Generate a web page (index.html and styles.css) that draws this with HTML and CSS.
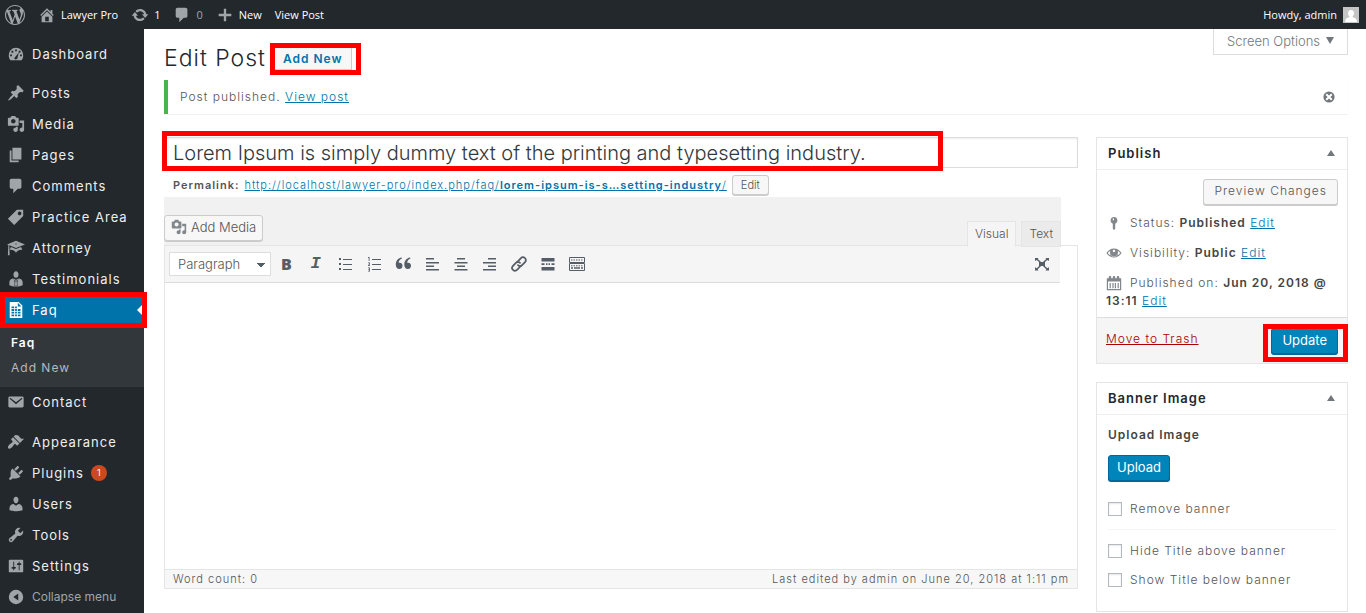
FILE: index.html
```html
<!DOCTYPE html>
<html lang="en">
<head>
<meta charset="utf-8">
<title>Edit Post - Lawyer Pro</title>
<link rel="stylesheet" href="styles.css">
</head>
<body>
<svg class="sprite" aria-hidden="true">
  <symbol id="i-wp" viewBox="0 0 20 20"><path d="M20 10c0-5.51-4.49-10-10-10C4.48 0 0 4.49 0 10c0 5.52 4.48 10 10 10 5.51 0 10-4.48 10-10zM7.78 15.37L4.37 6.22c.55-.02 1.17-.08 1.17-.08.5-.06.44-1.13-.06-1.11 0 0-1.45.11-2.37.11-.18 0-.37 0-.58-.01C4.12 2.69 6.87 1.11 10 1.11c2.33 0 4.45.87 6.05 2.34-.68-.11-1.65.39-1.65 1.58 0 .74.45 1.36.9 2.1.35.61.55 1.36.55 2.46 0 1.49-1.4 5-1.4 5l-3.03-8.37c.54-.02.82-.17.82-.17.5-.05.44-1.25-.06-1.22 0 0-1.44.12-2.38.12-.87 0-2.33-.12-2.33-.12-.5-.03-.56 1.2-.06 1.22l.92.08 1.26 3.41zM17.41 10c.24-.64.74-1.87.43-4.25.7 1.29 1.05 2.71 1.05 4.25 0 3.29-1.73 6.24-4.4 7.78.97-2.59 1.94-5.2 2.92-7.78zM6.1 18.09C3.12 16.65 1.11 13.53 1.11 10c0-1.3.23-2.48.72-3.59C3.25 10.3 4.67 14.2 6.1 18.09zm4.03-6.63l2.58 6.98c-.86.29-1.76.45-2.71.45-.79 0-1.57-.11-2.29-.33.81-2.38 1.62-4.74 2.42-7.1z"/></symbol>
  <symbol id="i-home" viewBox="0 0 20 20"><path d="M16 8.5l1.53 1.53-1.06 1.06L10 4.6l-6.47 6.49-1.06-1.06L10 2.5l4 4v-2h2v4zm-6-2.46l6 5.99V18H4v-5.97zM12 17v-5H8v5h4z"/></symbol>
  <symbol id="i-update" viewBox="0 0 20 20"><path d="M10.2 3.28c3.53 0 6.43 2.61 6.92 6h2.08l-3.5 4-3.5-4h2.32c-.45-1.97-2.21-3.45-4.32-3.45-1.45 0-2.73.71-3.54 1.78L4.95 5.66C6.23 4.2 8.11 3.28 10.2 3.28zm-.4 13.44c-3.52 0-6.43-2.61-6.92-6H.8l3.5-4c1.17 1.33 2.33 2.67 3.5 4H5.48c.45 1.97 2.21 3.45 4.32 3.45 1.45 0 2.73-.71 3.54-1.78l1.71 1.95c-1.28 1.46-3.15 2.38-5.25 2.38z"/></symbol>
  <symbol id="i-comment" viewBox="0 0 20 20"><path d="M5 2h9c1.1 0 2 .9 2 2v7c0 1.1-.9 2-2 2h-2l-5 5v-5H5c-1.1 0-2-.9-2-2V4c0-1.1.9-2 2-2z"/></symbol>
  <symbol id="i-plus" viewBox="0 0 20 20"><path d="M17 8.700v2.600h-5.700V17H8.700v-5.700H3V8.700h5.700V3h2.600v5.700z"/></symbol>
  <symbol id="i-dashboard" viewBox="0 0 20 20"><path fill-rule="evenodd" d="M3.760 17h12.480C17.580 15.370 18 13.500 18 12c0-5.500-3.580-9-8-9s-8 3.500-8 9c0 1.500.42 3.370 1.760 5zM9 5h2v2H9zM5 6.500h2v2H5zM13 6.500h2v2h-2zM3.500 10.500h2v2h-2zM14.500 10.500h2v2h-2zM8.200 14.500L13.200 8.300l-1.700 6.700c-.4 1.600-3.800 1.200-3.300-.5z"/></symbol>
  <symbol id="i-pin" viewBox="0 0 20 20"><path d="M10.440 3.020l1.820-1.820 6.360 6.350-1.830 1.820c-1.050-.68-2.480-.57-3.410.36l-.75.75c-.92.93-1.040 2.350-.35 3.410l-1.830 1.820-2.410-2.410-2.800 2.790c-.42.42-3.380 2.710-3.800 2.290s1.860-3.390 2.280-3.810l2.790-2.790L4.100 9.360l1.830-1.820c1.050.69 2.480.57 3.400-.36l.75-.75c.93-.92 1.050-2.350.36-3.410z"/></symbol>
  <symbol id="i-media" viewBox="0 0 20 20"><path d="M13 11V4c0-.55-.45-1-1-1h-1.670L9 1H5L3.670 3H2c-.55 0-1 .45-1 1v7c0 .55.45 1 1 1h10c.55 0 1-.45 1-1zM7 4.500c1.380 0 2.500 1.120 2.500 2.500S8.380 9.500 7 9.500 4.500 8.380 4.500 7 5.620 4.500 7 4.500zM14 6h5v10.500c0 1.380-1.120 2.500-2.500 2.500S14 17.880 14 16.500s1.120-2.500 2.500-2.500c.17 0 .34.02.5.05V9h-3V6zm-4 8.050V13h2v3.500c0 1.380-1.120 2.500-2.500 2.500S7 17.880 7 16.500 8.120 14 9.500 14c.17 0 .34.02.5.05z"/></symbol>
  <symbol id="i-page" viewBox="0 0 20 20"><path d="M6 15V2h10v13H6zm-1 1h8v2H3V5h2v11z"/></symbol>
  <symbol id="i-tag" viewBox="0 0 20 20"><path d="M11 2h7v7L8 19l-7-7zm3 6c1.100 0 2-.9 2-2s-.9-2-2-2-2 .9-2 2 .9 2 2 2z"/></symbol>
  <symbol id="i-learn" viewBox="0 0 20 20"><path d="M10 10L2.540 7.020 3 18H1l.48-11.410L0 6l10-4 10 4zm0-5c-.55 0-1 .22-1 .5s.45.5 1 .5 1-.22 1-.5-.45-.5-1-.5zm0 6l5.570-2.230c.71.94 1.200 2.070 1.360 3.300-.3-.04-.61-.07-.93-.07-2.550 0-4.780 1.370-6 3.410C8.780 13.370 6.550 12 4 12c-.32 0-.63.03-.93.07.16-1.230.65-2.360 1.360-3.300z"/></symbol>
  <symbol id="i-business" viewBox="0 0 20 20"><path d="M10 8.500c-2.100 0-2.800-1.700-2.800-3.500S8.300 1.500 10 1.500s2.800 1.700 2.800 3.500-.7 3.500-2.800 3.500zM6.500 9.500l2.500.5.600 1-.8 6 1.200 1.500 1.200-1.500-.8-6 .6-1 2.500-.5c2.300.5 3.900 2 3.900 4.500V17c-2 1-4.500 1.500-7.400 1.500S4.600 18 2.600 17v-3c0-2.500 1.600-4 3.900-4.500z"/><path class="dark" d="M7.500 9.500l1.700 3.500.4-2h.8l.4 2 1.700-3.500v1L11.400 14l.4 3.500L10 18l-1.800-.5.400-3.500-1.100-3.500z"/><path d="M9.500 11h1l.7 5.800L10 18l-1.200-1.200z"/></symbol>
  <symbol id="i-sheet" viewBox="0 0 20 20"><path fill-rule="evenodd" d="M3 1h10l4 4v14H3zM5 6v2h3V6zm4 0v2h2V6zm-4 3v2h3V9zm4 0v2h2V9zm3 0v2h3V9zm-7 3v2h3v-2zm4 0v2h2v-2zm3 0v2h3v-2zm-7 3v2h3v-2zm4 0v2h2v-2zm3 0v2h3v-2zM12 2v4h4z"/></symbol>
  <symbol id="i-mail" viewBox="0 0 20 20"><path fill-rule="evenodd" d="M3 4h14c.8 0 1.500.7 1.500 1.500v9c0 .8-.7 1.500-1.500 1.500H3c-.8 0-1.500-.7-1.500-1.500v-9C1.500 4.700 2.200 4 3 4zm.2 1.800c-.3.3-.2.700.1 1l6.700 5.700 6.700-5.700c.3-.3.400-.7.100-1s-.7-.3-1 0L10 10.400 4.200 5.800c-.3-.3-.7-.3-1 0z"/></symbol>
  <symbol id="i-brush" viewBox="0 0 20 20"><path d="M14.480 11.060L7.410 3.990l1.500-1.500c.5-.56 2.300-.47 3.510.32 1.210.8 1.430 1.280 2 2.100 1.180 1.640 3.060 1.520 4.550 1.520zm-.71.71L6.700 4.700 4.930 6.470c-.39.39-.39 1.020 0 1.410l1.060 1.060c.39.39.39 1.030 0 1.420-.6.6-1.430 1.110-2.210 1.690-.35.26-.7.53-1.010.84C1.430 14.230.4 16.080 1.400 17.070c.99 1 2.840-.03 4.180-1.360.31-.31.58-.66.85-1.020.57-.78 1.080-1.610 1.690-2.210.39-.39 1.020-.39 1.410 0l1.060 1.060c.39.39 1.020.39 1.410 0z"/></symbol>
  <symbol id="i-plug" viewBox="0 0 20 20"><path d="M13.110 4.360L9.870 7.600 8 5.730l3.240-3.240c.35-.34 1.050-.2 1.560.32.52.51.66 1.210.31 1.550zm-8 1.770l.91-1.120 9.010 9.010-1.190.84c-.71.71-2.630 1.160-3.820 1.160H6.140L4.900 17.260c-.59.59-1.540.59-2.120 0-.59-.58-.59-1.530 0-2.120l1.240-1.240v-3.880c0-1.130.4-3.190 1.090-3.890zm7.260 3.970l3.240-3.240c.34-.35 1.040-.21 1.550.31.52.51.66 1.210.31 1.550l-3.240 3.250z"/></symbol>
  <symbol id="i-user" viewBox="0 0 20 20"><path d="M10 9.250c-2.270 0-2.730-3.440-2.730-3.440C7 4.020 7.820 2 9.970 2c2.160 0 2.980 2.020 2.710 3.810 0 0-.41 3.440-2.680 3.440zm0 2.570L12.720 10c2.390 0 4.520 2.330 4.520 4.530v2.490s-3.650 1.130-7.240 1.130c-3.650 0-7.240-1.130-7.240-1.130v-2.490c0-2.250 1.940-4.480 4.470-4.480z"/></symbol>
  <symbol id="i-wrench" viewBox="0 0 20 20"><path d="M16.680 9.770c-1.340 1.340-3.300 1.670-4.950.99l-5.410 6.520c-.99.99-2.590.99-3.580 0s-.99-2.590 0-3.570l6.520-5.420c-.68-1.650-.35-3.610.99-4.950 1.280-1.280 3.120-1.620 4.720-1.060l-2.890 2.890 2.820 2.820 2.860-2.870c.53 1.580.18 3.390-1.080 4.650zM3.810 16.210c.4.39 1.040.39 1.430 0 .4-.4.4-1.040 0-1.430-.39-.4-1.030-.4-1.430 0-.39.39-.39 1.030 0 1.430z"/></symbol>
  <symbol id="i-settings" viewBox="0 0 20 20"><path d="M18 16V4c0-.55-.45-1-1-1H3c-.55 0-1 .45-1 1v12c0 .55.45 1 1 1h14c.55 0 1-.45 1-1zM8 11h1c.55 0 1 .45 1 1s-.45 1-1 1H8v1.500c0 .28-.22.5-.5.5s-.5-.22-.5-.5V13H6c-.55 0-1-.45-1-1s.45-1 1-1h1V5.500c0-.28.22-.5.5-.5s.5.22.5.5V11zm5-2h-1c-.55 0-1-.45-1-1s.45-1 1-1h1V5.500c0-.28.22-.5.5-.5s.5.22.5.5V7h1c.55 0 1 .45 1 1s-.45 1-1 1h-1v5.500c0 .28-.22.5-.5.5s-.5-.22-.5-.5V9z"/></symbol>
  <symbol id="i-collapse" viewBox="0 0 20 20"><path fill-rule="evenodd" d="M10 2a8 8 0 1 0 0 16 8 8 0 0 0 0-16zM12.500 6v8l-5.500-4z"/></symbol>
  <symbol id="i-avatar" viewBox="0 0 16 16"><path fill="#c5c5c5" d="M0 0h16v16H0z"/><path fill="#fff" d="M8 3c2 0 3 1.300 3 3.200 0 1.300-.6 2.300-1.400 2.900v1l3 1.300c.9.5 1.300 1.800 1.300 3.600H2.100c0-1.800.4-3.100 1.300-3.600l3-1.300v-1C5.600 8.500 5 7.500 5 6.200 5 4.300 6 3 8 3z"/></symbol>
  <symbol id="i-dismiss" viewBox="0 0 20 20"><path fill-rule="evenodd" d="M10 2a8 8 0 1 0 0 16 8 8 0 0 0 0-16zM7 5l3 3 3-3 2 2-3 3 3 3-2 2-3-3-3 3-2-2 3-3-3-3z"/></symbol>
  <symbol id="i-ul" viewBox="0 0 18 18"><path d="M3 3h2v2H3zM3 8h2v2H3zM3 13h2v2H3zM7 4h9v1H7zM7 9h9v1H7zM7 14h9v1H7z"/></symbol>
  <symbol id="i-ol" viewBox="0 0 18 18"><path d="M7 4h9v1H7zM7 9h9v1H7zM7 14h9v1H7zM3 2h1.500v4h-.8V3H3zM3 7.500h2v1.800l-1 1h1v.7H3v-.8l1.200-1.200v-.8H3zM3 12.500h2v4H3v-.7h1.200V15h-.8v-.8h.8v-.9H3z"/></symbol>
  <symbol id="i-quote" viewBox="0 0 18 18"><path d="M8 3.500C5.800 4.300 4.700 6 4.700 7.800c2-.6 3.800.6 3.800 2.900 0 2-1.300 3.300-3.200 3.300-2.200 0-3.500-1.700-3.500-4.200 0-3.700 2-6.500 5.700-7.200zM16.500 3.500c-2.200.8-3.300 2.500-3.300 4.300 2-.6 3.800.6 3.800 2.900 0 2-1.300 3.300-3.200 3.300-2.200 0-3.500-1.700-3.500-4.200 0-3.700 2-6.500 5.700-7.200z"/></symbol>
  <symbol id="i-left" viewBox="0 0 18 18"><path d="M3 3h8v1.500H3zM3 7h13v1.500H3zM3 10.500h8V12H3zM3 14h13v1.500H3z"/></symbol>
  <symbol id="i-center" viewBox="0 0 18 18"><path d="M5 3h8v1.500H5zM2.500 7h13v1.500h-13zM5 10.500h8V12H5zM2.500 14h13v1.500h-13z"/></symbol>
  <symbol id="i-right" viewBox="0 0 18 18"><path d="M7 3h8v1.500H7zM2 7h13v1.500H2zM7 10.500h8V12H7zM2 14h13v1.500H2z"/></symbol>
  <symbol id="i-link" viewBox="0 0 18 18"><g fill="none" stroke="currentColor" stroke-width="1.800" stroke-linecap="round"><path d="M7.200 7l3.500-3.700c1.300-1.300 3.100-1.300 4.300-.2s1.100 2.900 0 4.100l-2.900 2.900c-1.200 1.200-3 1.100-4.100.1"/><path d="M10.800 11l-3.500 3.700c-1.300 1.300-3.100 1.300-4.300.2s-1.100-2.900 0-4.100l2.900-2.900c1.200-1.200 3-1.100 4.100-.1"/></g></symbol>
  <symbol id="i-more" viewBox="0 0 18 18"><path d="M2.500 3h13v3.500h-13zM2.500 12h13v3.500h-13zM2.500 8.300h3V10h-3zM7 8.300h1.500V10H7zM9.500 8.300H11V10H9.500zM12.500 8.300h3V10h-3z"/></symbol>
  <symbol id="i-keyboard" viewBox="0 0 18 18"><g fill="none" stroke="currentColor"><path d="M1.500 2.500h15v5h-15zM1.500 8.500h15v7h-15z"/><path stroke-dasharray="1.500 1" d="M3 5h12M3 10.800h12"/><path stroke-width="1.500" d="M3 13h2M6 13h6M13 13h2"/></g></symbol>
  <symbol id="i-expand" viewBox="0 0 18 18"><path d="M6 7h6v4H6zM2 3h3.500L4.700 4l3.200 2.800-.9.900L3.700 5 2 6zM16 3v3l-1.700-1L11 7.700l-.9-.9L13.300 4l-.8-1zM2 15.500v-3.300l1.700 1L7 10.300l.9.900L4.700 14.300l.8 1.200zM16 15.500h-3.500l.8-1.200-3.200-3.100.9-.9 3.300 2.900 1.700-1z"/></symbol>
  <symbol id="i-key" viewBox="0 0 20 20"><path fill-rule="evenodd" d="M10 2.500a4.300 4.300 0 0 1 1.500 8.300V17L10 19l-1.500-2v-6.200A4.300 4.300 0 0 1 10 2.500zM8.500 4.500v2H10v-2z"/></symbol>
  <symbol id="i-eye" viewBox="0 0 20 20"><path fill-rule="evenodd" d="M10 4.500c4 0 7.300 2.300 9.500 5.500-2.200 3.200-5.500 5.500-9.500 5.500S2.700 13.200.5 10C2.700 6.800 6 4.500 10 4.500zM5.500 7.300C4.200 8 3.100 9 2.200 10c1.900 2.500 4.600 4 7.800 4s5.900-1.500 7.800-4c-.9-1-2-2-3.300-2.700.4.700.5 1.400.5 2.200a5 5 0 0 1-10 0c0-.8.100-1.500.5-2.200zM10 6c-.8 0-1.500.7-1.500 1.500S9.200 9 10 9s1.500-.7 1.500-1.500S10.800 6 10 6z"/></symbol>
  <symbol id="i-cal" viewBox="0 0 20 20"><path fill-rule="evenodd" d="M1 4h2.500V2.500C3.500 1 6.500 1 6.500 2.500V4h2V2.500c0-1.500 3-1.500 3 0V4h2V2.500c0-1.500 3-1.500 3 0V4H19v15H1zm1.500 4v9.500h15V8zM4.500 10h1.500v6.500H4.500zM8 10h1.500v6.500H8zM11 10h1.500v6.500H11zM14.500 10H16v6.500h-1.500z"/></symbol>
</svg>

<header class="adminbar">
  <a class="bar-item" href="#" aria-label="About WordPress"><svg class="icon icon-wp"><use href="#i-wp"/></svg></a>
  <a class="bar-item" href="#"><svg class="icon icon-bar"><use href="#i-home"/></svg>Lawyer Pro</a>
  <a class="bar-item" href="#"><svg class="icon icon-bar"><use href="#i-update"/></svg>1</a>
  <a class="bar-item bar-muted" href="#"><svg class="icon icon-bar"><use href="#i-comment"/></svg>0</a>
  <a class="bar-item" href="#"><svg class="icon icon-bar"><use href="#i-plus"/></svg>New</a>
  <a class="bar-item" href="#">View Post</a>
  <a class="bar-item bar-account" href="#">Howdy, admin<svg class="avatar"><use href="#i-avatar"/></svg></a>
</header>

<div class="layout">
  <nav class="sidebar" aria-label="Main menu">
    <ul class="menu">
      <li><a class="menu-link" href="#"><svg class="icon"><use href="#i-dashboard"/></svg>Dashboard</a></li>
      <li class="first-group"><a class="menu-link" href="#"><svg class="icon"><use href="#i-pin"/></svg>Posts</a></li>
      <li><a class="menu-link" href="#"><svg class="icon"><use href="#i-media"/></svg>Media</a></li>
      <li><a class="menu-link" href="#"><svg class="icon"><use href="#i-page"/></svg>Pages</a></li>
      <li><a class="menu-link" href="#"><svg class="icon"><use href="#i-comment"/></svg>Comments</a></li>
      <li><a class="menu-link" href="#"><svg class="icon"><use href="#i-tag"/></svg>Practice Area</a></li>
      <li><a class="menu-link" href="#"><svg class="icon"><use href="#i-learn"/></svg>Attorney</a></li>
      <li><a class="menu-link" href="#"><svg class="icon"><use href="#i-business"/></svg>Testimonials</a></li>
      <li>
        <a class="menu-link current marked marked-menu" href="#"><svg class="icon"><use href="#i-sheet"/></svg>Faq</a>
        <ul class="submenu">
          <li><a class="submenu-link active" href="#">Faq</a></li>
          <li><a class="submenu-link" href="#">Add New</a></li>
        </ul>
      </li>
      <li><a class="menu-link" href="#"><svg class="icon"><use href="#i-mail"/></svg>Contact</a></li>
      <li class="second-group"><a class="menu-link" href="#"><svg class="icon"><use href="#i-brush"/></svg>Appearance</a></li>
      <li><a class="menu-link" href="#"><svg class="icon"><use href="#i-plug"/></svg>Plugins <span class="count">1</span></a></li>
      <li><a class="menu-link" href="#"><svg class="icon"><use href="#i-user"/></svg>Users</a></li>
      <li><a class="menu-link" href="#"><svg class="icon"><use href="#i-wrench"/></svg>Tools</a></li>
      <li><a class="menu-link" href="#"><svg class="icon"><use href="#i-settings"/></svg>Settings</a></li>
      <li><button class="menu-link collapse" type="button"><svg class="icon"><use href="#i-collapse"/></svg>Collapse menu</button></li>
    </ul>
  </nav>

  <main class="content">
    <div class="page-head">
      <h1 class="page-title">Edit Post</h1>
      <span class="marked marked-add"><a class="add-new" href="#">Add New</a></span>
      <button class="screen-options" type="button">Screen Options <span class="tri-down"></span></button>
    </div>

    <div class="notice">
      <p>Post published. <a href="#">View post</a></p>
      <button class="dismiss" type="button" aria-label="Dismiss this notice"><svg class="icon-small"><use href="#i-dismiss"/></svg></button>
    </div>

    <div class="columns">
      <section class="primary">
        <div class="title-wrap marked marked-title">
          <input class="title-input" type="text" aria-label="Post title" value="Lorem Ipsum is simply dummy text of the printing and typesetting industry.">
        </div>
        <div class="permalink">
          <strong>Permalink:</strong>
          <a href="#">http://localhost/lawyer-pro/index.php/faq/<b>lorem-ipsum-is-s…setting-industry</b>/</a>
          <button class="button button-small" type="button">Edit</button>
        </div>

        <div class="editor-tools">
          <button class="button add-media" type="button"><svg class="icon"><use href="#i-media"/></svg>Add Media</button>
          <div class="tabs">
            <button class="tab tab-active" type="button">Visual</button>
            <button class="tab" type="button">Text</button>
          </div>
        </div>
        <div class="editor">
          <div class="toolbar">
            <select class="format" aria-label="Format"><option>Paragraph</option></select>
            <button class="tool tool-b" type="button" aria-label="Bold">B</button>
            <button class="tool tool-i" type="button" aria-label="Italic">I</button>
            <button class="tool" type="button" aria-label="Bulleted list"><svg class="icon"><use href="#i-ul"/></svg></button>
            <button class="tool" type="button" aria-label="Numbered list"><svg class="icon"><use href="#i-ol"/></svg></button>
            <button class="tool" type="button" aria-label="Blockquote"><svg class="icon"><use href="#i-quote"/></svg></button>
            <button class="tool" type="button" aria-label="Align left"><svg class="icon"><use href="#i-left"/></svg></button>
            <button class="tool" type="button" aria-label="Align center"><svg class="icon"><use href="#i-center"/></svg></button>
            <button class="tool" type="button" aria-label="Align right"><svg class="icon"><use href="#i-right"/></svg></button>
            <button class="tool" type="button" aria-label="Insert link"><svg class="icon"><use href="#i-link"/></svg></button>
            <button class="tool" type="button" aria-label="Read more"><svg class="icon"><use href="#i-more"/></svg></button>
            <button class="tool" type="button" aria-label="Toolbar toggle"><svg class="icon"><use href="#i-keyboard"/></svg></button>
            <button class="tool tool-end" type="button" aria-label="Distraction-free writing"><svg class="icon"><use href="#i-expand"/></svg></button>
          </div>
          <textarea class="editor-body" aria-label="Post content"></textarea>
          <div class="status-bar"><span>Word count: 0</span><span>Last edited by admin on June 20, 2018 at 1:11 pm</span></div>
        </div>
      </section>

      <aside class="secondary">
        <section class="box">
          <h2 class="box-title">Publish<span class="tri-up"></span></h2>
          <div class="publish-body">
            <button class="button preview" type="button">Preview Changes</button>
            <p class="row"><svg class="icon"><use href="#i-key"/></svg>Status: <b>Published</b> <a href="#">Edit</a></p>
            <p class="row"><svg class="icon"><use href="#i-eye"/></svg>Visibility: <b>Public</b> <a href="#">Edit</a></p>
            <p class="row"><svg class="icon"><use href="#i-cal"/></svg>Published on: <b>Jun 20, 2018 @</b> <b>13:11</b> <a href="#">Edit</a></p>
          </div>
          <div class="publish-actions">
            <a class="trash" href="#">Move to Trash</a>
            <span class="marked marked-update"><button class="button primary-button" type="button">Update</button></span>
          </div>
        </section>

        <section class="box">
          <h2 class="box-title">Banner Image<span class="tri-up"></span></h2>
          <div class="banner-body">
            <h3 class="field-title">Upload Image</h3>
            <button class="button primary-button" type="button">Upload</button>
            <label class="check check-remove"><input type="checkbox">Remove banner</label>
            <label class="check"><input type="checkbox">Hide Title above banner</label>
            <label class="check"><input type="checkbox">Show Title below banner</label>
          </div>
        </section>
      </aside>
    </div>
  </main>
</div>
</body>
</html>
```

FILE: styles.css
```css
* { box-sizing: border-box; }

body {
  margin: 0;
  min-height: 100vh;
  display: flex;
  flex-direction: column;
  background: #fff;
  color: #555;
  font: 300 12px/18px Inter, "Open Sans", sans-serif;
  letter-spacing: 1px;
}

button, input, select, textarea { font: inherit; color: inherit; margin: 0; }
button { letter-spacing: 0; cursor: pointer; }
a { color: #0073aa; }
b, strong { font-weight: 600; }
ul { list-style: none; margin: 0; padding: 0; }
h1, h2, h3, p { margin: 0; }

.sprite { display: none; }
.icon { width: 18px; height: 18px; fill: currentColor; flex: none; }
.icon-small { width: 14px; height: 14px; fill: currentColor; display: block; }

/* Red highlight frames */
.marked { position: relative; }
.marked::after {
  content: "";
  position: absolute;
  border: 5px solid #f00;
  pointer-events: none;
  z-index: 2;
}
.marked-menu::after { inset: -3px -3px -2px 0; }
.marked-add::after { inset: -4px -9px -5px -4px; }
.marked-title::after { inset: -6px 135px -3px -2px; }
.marked-update::after { inset: -4px -10px -8px -8px; }

/* Admin bar */
.adminbar {
  display: flex;
  align-items: center;
  height: 29px;
  padding: 0 7px 0 5px;
  background: #23282d;
  font: 11px/29px "Open Sans", "Noto Sans", sans-serif;
  letter-spacing: 0;
}
.bar-item { display: flex; align-items: center; color: #fff; text-decoration: none; margin-right: 13px; }
.bar-item .icon { color: #a0a5aa; }
.icon-wp { width: 20px; height: 20px; }
.icon-bar { margin-right: 5px; }
.bar-muted { color: #a0a5aa; }
.bar-account { margin: 0 0 0 auto; }
.avatar { width: 16px; height: 16px; margin-left: 6px; }

.layout { display: flex; flex: 1; }

/* Sidebar */
.sidebar { flex: none; width: 144px; background: #23282d; }
.menu { padding-top: 10px; }
.first-group { margin-top: 8px; }
.second-group { margin-top: 9px; }
.menu-link {
  display: flex;
  align-items: center;
  gap: 7px;
  width: 100%;
  height: 31px;
  padding: 0 7px 1px;
  color: #eee;
  font-size: 13px;
  font-weight: 400;
  text-decoration: none;
}
.menu-link .icon { color: #a0a5aa; }
.dark { fill: #23282d; }
.menu-link.current { background: #0073aa; color: #fff; }
.menu-link.current .icon { color: #fff; }
.menu-link.current::before {
  content: "";
  order: 1;
  margin-left: auto;
  margin-right: -5px;
  border: 5px solid transparent;
  border-right-color: #fff;
}
.submenu { background: #32373c; padding: 4px 0 7px; }
.submenu-link { display: block; padding: 0 11px; line-height: 25px; color: #b4b9be; text-decoration: none; font-weight: 400; }
.submenu-link.active { color: #fff; font-weight: 600; }
.count {
  width: 16px;
  height: 16px;
  border-radius: 50%;
  background: #ca4a1f;
  color: #fff;
  font-size: 9px;
  line-height: 16px;
  text-align: center;
  letter-spacing: 0;
}
.collapse { border: 0; background: none; color: #a0a5aa; font-size: 12px; }

/* Content */
.content { flex: 1; min-width: 0; padding: 0 18px 1px 20px; }
.page-head { display: flex; align-items: flex-start; height: 51px; }
.page-title { padding-top: 15px; font-size: 23px; line-height: 29px; font-weight: 300; color: #23282d; }
.marked-add { margin: 18px 0 0 8px; }
.add-new {
  display: block;
  padding: 0 8px;
  border: 1px solid #ccc;
  background: #f7f7f7;
  font-weight: 600;
  line-height: 21px;
  text-decoration: none;
}
.screen-options {
  display: flex;
  align-items: center;
  gap: 6px;
  margin-left: auto;
  height: 26px;
  padding: 0 13px 2px;
  border: 1px solid #ddd;
  border-top: 0;
  background: #fff;
  color: #72777c;
  font-size: 13px;
}
.tri-down { border: 4px solid transparent; border-top: 7px solid #72777c; border-bottom: 0; }
.tri-up { border: 4px solid transparent; border-bottom: 6px solid #72777c; border-top: 0; }

.notice {
  display: flex;
  align-items: center;
  justify-content: space-between;
  height: 34px;
  padding: 0 12px;
  border-left: 4px solid #46b450;
  box-shadow: 0 1px 1px rgba(0, 0, 0, .05);
}
.dismiss { padding: 0; border: 0; background: none; color: #72777c; }

.columns { display: flex; align-items: flex-start; gap: 18px; margin-top: 23px; }
.primary { flex: 1; min-width: 0; }
.secondary { flex: none; width: 252px; display: flex; flex-direction: column; gap: 18px; }

.title-input {
  display: block;
  width: 100%;
  height: 31px;
  padding: 0 8px;
  border: 1px solid #ddd;
  box-shadow: inset 0 1px 2px rgba(0, 0, 0, .07);
  color: #32373c;
  font-size: 20px;
  letter-spacing: 0;
}
.permalink { display: flex; align-items: center; gap: 5px; height: 29px; padding: 5px 9px 0; font-size: 11px; white-space: nowrap; }

.button {
  border: 1px solid #ccc;
  border-radius: 3px;
  background: #f7f7f7;
  box-shadow: 0 1px 0 #ccc;
  color: #555;
  line-height: 22px;
  padding: 0 10px 2px;
}
.button-small { line-height: 18px; padding: 0 8px; font-size: 11px; }
.add-media { display: flex; align-items: center; gap: 4px; padding: 0 6px 2px; font-size: 13px; }
.add-media .icon { width: 16px; height: 16px; color: #82878c; }

.editor-tools {
  display: flex;
  justify-content: space-between;
  height: 48px;
  margin-right: 17px;
  padding-top: 18px;
  background: #f1f1f1;
}
.editor-tools .add-media { height: 26px; }
.tabs { display: flex; gap: 5px; padding-top: 6px; }
.tab { position: relative; z-index: 1; height: 26px; padding: 0 7px 1px; border: 1px solid #e5e5e5; background: #ebebeb; }
.tab-active { background: #f5f5f5; border-bottom-color: #f5f5f5; }
.editor { border: 1px solid #e5e5e5; }
.toolbar {
  display: flex;
  align-items: center;
  height: 37px;
  margin-right: 17px;
  padding: 0 4px;
  background: #f5f5f5;
  border-bottom: 1px solid #ddd;
}
.format {
  width: 102px;
  height: 24px;
  margin-right: 1px;
  padding: 0 8px;
  border: 1px solid #ddd;
  appearance: none;
  background: linear-gradient(to bottom right, #555d66 50%, transparent 50%) 91px 10px / 4px 5px no-repeat,
    linear-gradient(to bottom left, #555d66 50%, transparent 50%) 87px 10px / 4px 5px no-repeat, #fff;
  font-size: 13px;
  letter-spacing: 0;
}
.tool {
  display: flex;
  align-items: center;
  justify-content: center;
  width: 29px;
  height: 28px;
  padding: 0;
  border: 0;
  background: none;
  color: #555d66;
}
.tool-b { font: 900 16px/20px "Open Sans", sans-serif; }
.tool-i { font: italic 700 17px/20px "Liberation Mono", monospace; }
.tool-end { margin-left: auto; }
.editor-body { display: block; width: 100%; height: 286px; border: 0; resize: none; padding: 10px; }
.status-bar {
  display: flex;
  justify-content: space-between;
  padding: 0 8px;
  border-top: 1px solid #e5e5e5;
  background: #f7f7f7;
  font-size: 11px;
  line-height: 18px;
}

/* Side boxes */
.box { border: 1px solid #e5e5e5; }
.box-title {
  display: flex;
  align-items: center;
  justify-content: space-between;
  height: 32px;
  padding: 0 12px 1px 11px;
  border-bottom: 1px solid #eee;
  color: #23282d;
  font-size: 13px;
  font-weight: 600;
}
.publish-body { padding: 9px 9px 7px; }
.preview { display: block; margin: 0 0 9px auto; letter-spacing: 1px; }
.row { padding-bottom: 12px; }
.row:last-child { padding-bottom: 0; }
.row .icon { color: #82878c; width: 16px; height: 16px; margin-right: 8px; vertical-align: -4px; }
.row b { color: #444; }
.publish-actions {
  display: flex;
  align-items: center;
  justify-content: space-between;
  height: 46px;
  padding: 0 9px;
  border-top: 1px solid #ddd;
  background: #f5f5f5;
}
.trash { color: #a00; padding-bottom: 4px; }
.primary-button { background: #0085ba; border-color: #006799; box-shadow: 0 1px 0 #006799; color: #fff; font-size: 13px; font-weight: 400; }
.banner-body { padding: 11px 11px 17px; }
.banner-body .primary-button { padding: 0 8px 2px; }
.field-title { margin-bottom: 11px; font-size: 12px; font-weight: 600; color: #444; }
.check { display: flex; align-items: center; gap: 8px; line-height: 29px; }
.check input { appearance: none; width: 14px; height: 14px; border: 1px solid #b4b9be; background: #fff; box-shadow: inset 0 1px 2px rgba(0, 0, 0, .1); }
.check-remove { margin: 13px 0 6px; padding-bottom: 6px; border-bottom: 1px solid #f5f5f5; }
```
